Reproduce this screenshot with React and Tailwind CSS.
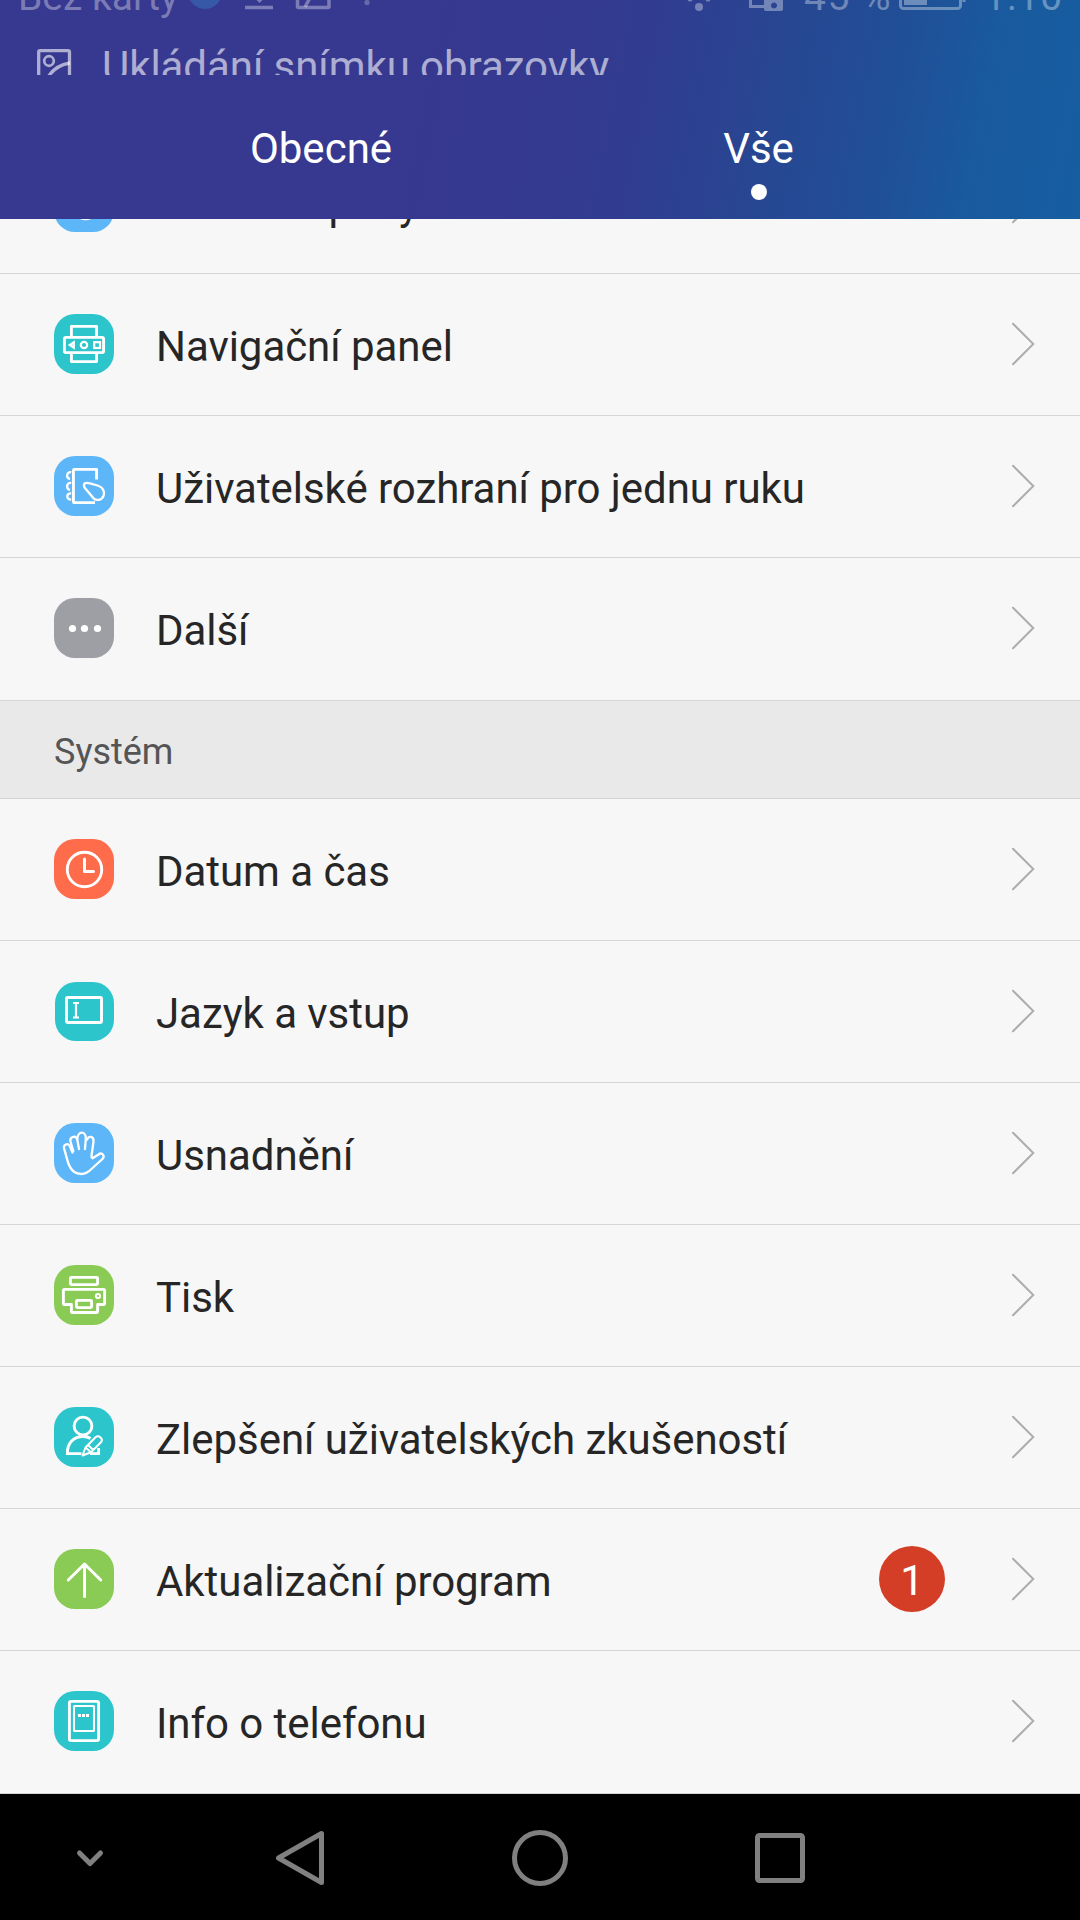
const W = { fill: "none", stroke: "#fff", strokeWidth: 2.9, strokeLinecap: "round", strokeLinejoin: "round" };

const glyphs = {
  motion: <circle cx="31.500" cy="35" r="11.800" {...W} />,
  nav: (
    <g {...W}>
      <path d="M17.400 22.500V12.400h25.200v10.100M17.400 40v7.600h25.200V40" />
      <rect x="10.400" y="23.400" width="39.200" height="15.200" rx="1.500" />
      <path d="M19.800 28.400v5.200l-4-2.600z" strokeWidth="2.200" strokeLinejoin="miter" />
      <circle cx="30" cy="31" r="3.200" strokeWidth="2.200" />
      <rect x="40.200" y="28.200" width="5.800" height="5.800" strokeWidth="2.200" strokeLinejoin="miter" />
    </g>
  ),
  hand1: (
    <g {...W}>
      <path d="M42.600 23.500V13.400H20.400Q19.400 13.400 19.400 14.400V45.500Q19.400 46.600 20.400 46.600H41" strokeLinecap="butt" />
      <path d="M30.500 31.500C28.500 26.500 32.500 26.300 36 27.300L43.500 29.500C49.500 31.500 51 36 49.500 40C47.500 44.500 42.500 45 39.500 42.300Z" strokeWidth="2.300" />
      <path d="M17.200 16.200C12 15.500 12 22.500 16 23M17.200 27C12 26.300 12 33 16 34M17.200 37.500C12 37 12 43.500 17.200 43.700" strokeWidth="2.300" strokeLinecap="butt" />
    </g>
  ),
  more: (
    <g fill="#fff">
      <circle cx="18.500" cy="30.500" r="3.600" />
      <circle cx="30.500" cy="30.500" r="3.600" />
      <circle cx="43.500" cy="30.500" r="3.600" />
    </g>
  ),
  clock: (
    <g {...W}>
      <circle cx="30.500" cy="30.500" r="17.200" />
      <path d="M30.500 20v12.500h9" strokeWidth="3" />
    </g>
  ),
  lang: (
    <g {...W}>
      <rect x="12.500" y="16.500" width="35" height="25" rx="1" />
      <path d="M19 22h6M19 36.500h6M22 22v14.500" strokeWidth="2.200" strokeLinecap="butt" />
    </g>
  ),
  hand: (
    <g {...W} strokeWidth="2.300">
      <path d="M18.500 29.500L15.800 23.200C14.500 19.800 9.500 21 10 25C11.500 30 13 37 15 42C17.500 48 21.500 51 27.500 51C32 51 34.500 49 38 45.500L49 35.500C51 32 47.500 29 44.500 31.500L38.500 35.300C37.800 35 37.300 34 37.500 33L39.500 18.500C40 13.500 34.500 12 33.200 16.500" />
      <path d="M19.300 28L16.300 18C16 13.500 22 12 23.300 16.500L25 26M23.300 17C23 8 32 7 31.800 15.500L31 26" />
    </g>
  ),
  print: (
    <g {...W}>
      <rect x="16.400" y="12.400" width="27.200" height="7.200" rx="1" />
      <path d="M17.400 39.500H10.500Q9.400 39.500 9.400 38.500V25.500Q9.400 24.400 10.500 24.400H49.500Q50.600 24.400 50.600 25.500V38.500Q50.600 39.500 49.500 39.500H43.600V46.500Q43.600 47.500 42.600 47.500H18.500Q17.400 47.500 17.400 46.500Z" />
      <rect x="22.400" y="35.400" width="15.200" height="7.200" rx="1" />
      <circle cx="44" cy="31" r="2.100" strokeWidth="2" />
    </g>
  ),
  user: (
    <g {...W}>
      <circle cx="29" cy="19" r="8.900" />
      <path d="M27.500 46.600H13.400C13 36 20 29.500 29 29.500C32 29.500 34.500 30 36.500 31.500M36 46.600H44.600V41" strokeLinecap="butt" strokeLinejoin="miter" />
      <path d="M28.500 48.500L31.500 40.500L41.500 30.300Q44 28.300 46.300 30.300Q49 32.500 47.200 35L37 45.200ZM31.500 40.500L37 45.200M34 38L39 42.800" strokeWidth="2" />
    </g>
  ),
  up: <path d="M30.500 47.500V15M14.300 31L30.500 15L46.700 31" {...W} strokeWidth="3" />,
  info: (
    <g {...W}>
      <rect x="15.400" y="10.400" width="29.200" height="39.200" rx="1.800" />
      <rect x="20" y="15" width="20" height="25" rx=".5" strokeWidth="2.100" />
      <path d="M24 24.500h3M28 24.500h3M32 24.500h3" strokeWidth="3" strokeLinecap="butt" />
    </g>
  ),
};

const TEAL = "bg-[#2cc5cc]";
const BLUE = "bg-[#5cb6f8]";
const GREEN = "bg-[#8acb55]";

const display = [
  { label: "Ovládání pohybu", icon: "motion", bg: BLUE },
  { label: "Navigační panel", icon: "nav", bg: TEAL },
  { label: "Uživatelské rozhraní pro jednu ruku", icon: "hand1", bg: BLUE },
  { label: "Další", icon: "more", bg: "bg-[#9e9fa5]" },
];

const system = [
  { label: "Datum a čas", icon: "clock", bg: "bg-[#ff6c4c]" },
  { label: "Jazyk a vstup", icon: "lang", bg: TEAL, small: true },
  { label: "Usnadnění", icon: "hand", bg: BLUE },
  { label: "Tisk", icon: "print", bg: GREEN },
  { label: "Zlepšení uživatelských zkušeností", icon: "user", bg: TEAL },
  { label: "Aktualizační program", icon: "up", bg: GREEN, badge: "1" },
  { label: "Info o telefonu", icon: "info", bg: TEAL },
];

function Row({ label, icon, bg, badge, small, last }) {
  return (
    <li className={`flex shrink-0 items-center border-b border-[#d6d6d6] pl-[54px] pr-[45px] ${last ? "h-[143px] pb-[2px]" : "h-[142px] pb-px"}`}>
      <span className="flex size-[60px] shrink-0 items-end justify-end">
        <span className={`flex items-end justify-end overflow-hidden rounded-[21px] ${bg} ${small ? "size-[59px]" : "size-[60px]"}`}>
          <svg className="size-[60px] shrink-0" viewBox="0 0 60 60">{glyphs[icon]}</svg>
        </span>
      </span>
      <span className="ml-[42px] flex-1 whitespace-nowrap pt-[6px] text-[42px] leading-[50px] tracking-[-0.05px] text-[#262626]">{label}</span>
      {badge && (
        <span className="mr-[66px] flex size-[66px] items-center justify-center rounded-full bg-[#d43d26] pt-[4px] text-[42px] leading-[50px] text-white">{badge}</span>
      )}
      <svg className="h-[44px] w-[24px] shrink-0" viewBox="0 0 24 44" fill="none" stroke="#adadad" strokeWidth="2" strokeLinecap="round">
        <path d="M2 1.800L22.300 22L2 42.200" />
      </svg>
    </li>
  );
}

function StatusBar() {
  return (
    <div className="flex h-[75px] flex-col overflow-hidden">
      <div className="-mt-[27px] flex h-[48px] shrink-0 items-center text-[39px] leading-[48px] text-white/35">
        <span className="ml-[18px] w-[159px] whitespace-nowrap">Bez karty</span>
        <span className="mb-[10px] ml-[11px] size-[34px] rounded-full bg-[#3757a7]" />
        <svg className="ml-[20px] h-[48px] w-[140px]" viewBox="0 0 140 48" fill="none" stroke="currentColor" strokeWidth="3.500">
          <path d="M3 34.500h28M17.500 10v16M9 19l8.500 8.500L26 19" />
          <rect x="55.500" y="6" width="31.500" height="28.500" rx="1" />
          <path d="M63 34l7-13 17-8" />
          <circle cx="125" cy="29.500" r="2.700" fill="currentColor" stroke="none" opacity=".7" />
        </svg>
        <svg className="ml-auto h-[48px] w-[100px]" viewBox="0 0 100 48" fill="currentColor">
          <circle cx="16" cy="34" r="4" />
          <circle cx="7" cy="26" r="2.500" />
          <circle cx="25" cy="26" r="2.500" />
          <path d="M67.500 10v23.500h13.500" fill="none" stroke="currentColor" strokeWidth="3" />
          <path fillRule="evenodd" d="M81 22h19v14q0 2-2 2H83q-2 0-2-2zM91 29.500a3 3 0 1 0 .01 0z" />
        </svg>
        <span className="ml-[21px] w-[93px] whitespace-nowrap tracking-[1.500px]">45 %</span>
        <svg className="h-[48px] w-[70px]" viewBox="0 0 70 48" fill="none" stroke="currentColor" strokeWidth="3">
          <rect x="3.500" y="8" width="60" height="27.500" rx="3" />
          <path d="M7 12h23v20H7z" fill="currentColor" stroke="none" />
          <path d="M67 18v11" />
        </svg>
        <span className="ml-[17px] mr-[16px] w-[80px] whitespace-nowrap tracking-[1px]">1:10</span>
      </div>
      <div className="flex h-[54px] shrink-0 items-start pl-[36px] text-white/60">
        <svg className="mt-[27px] h-[34px] w-[36px] shrink-0" viewBox="0 0 36 34" fill="none" stroke="currentColor" strokeWidth="3.300">
          <rect x="2.700" y="2.700" width="30.800" height="30" rx="1.500" />
          <circle cx="13" cy="13" r="4.800" strokeWidth="2.700" />
          <path d="M11 31Q18 17.500 34 15" />
        </svg>
        <span className="ml-[30px] mt-[21px] whitespace-nowrap text-[42px] leading-[50px] tracking-[-0.06px]">Ukládání snímku obrazovky</span>
      </div>
    </div>
  );
}

export default function App() {
  return (
    <div className="flex h-[1920px] w-[1080px] flex-col overflow-hidden bg-[#f7f7f7] font-['Roboto',sans-serif]">
      <header className="z-10 flex h-[219px] shrink-0 flex-col bg-[linear-gradient(101deg,#37388f_0%,#37388f_36%,#35398f_48%,#303c90_59%,#284692_70%,#204f97_81%,#195a9e_90%,#165ea1_100%)]">
        <StatusBar />
        <nav className="flex text-[42px] leading-[50px] text-white">
          <span className="w-[642px] pt-[49px] text-center">Obecné</span>
          <span className="flex w-[233px] flex-col items-center pt-[49px]">
            Vše
            <span className="mt-[10px] size-[16px] rounded-full bg-white" />
          </span>
        </nav>
      </header>
      <main className="-mt-[87px] flex h-[1662px] shrink-0 flex-col">
        <ul className="flex flex-col">
          {display.map((r, i) => <Row key={r.label} {...r} last={i === display.length - 1} />)}
        </ul>
        <h2 className="flex h-[98px] shrink-0 items-center border-b border-[#d6d6d6] bg-[#e9e9e9] pl-[54px] pt-[5px] text-[36px] leading-[42px] text-[#555]">Systém</h2>
        <ul className="flex flex-col">
          {system.map((r, i) => <Row key={r.label} {...r} last={i === system.length - 1} />)}
        </ul>
      </main>
      <footer className="flex h-[126px] shrink-0 items-center bg-black pl-[60px] pt-[2px] text-[#808080]">
        <svg className="size-[60px]" viewBox="0 0 60 60" fill="none" stroke="currentColor" strokeWidth="5" strokeLinecap="round" strokeLinejoin="round">
          <path d="M19.500 25L30 35.500L40.500 25" />
        </svg>
        <svg className="ml-[150px] size-[60px]" viewBox="0 0 60 60" fill="none" stroke="currentColor" strokeWidth="5" strokeLinejoin="round">
          <path d="M8.500 30L51.500 5.500V54.500Z" />
        </svg>
        <svg className="ml-[180px] size-[60px]" viewBox="0 0 60 60" fill="none" stroke="currentColor" strokeWidth="5">
          <circle cx="30" cy="30" r="25.500" />
        </svg>
        <svg className="ml-[180px] size-[60px]" viewBox="0 0 60 60" fill="none" stroke="currentColor" strokeWidth="5">
          <rect x="7.500" y="7.500" width="45" height="45" rx="2" />
        </svg>
      </footer>
    </div>
  );
}
